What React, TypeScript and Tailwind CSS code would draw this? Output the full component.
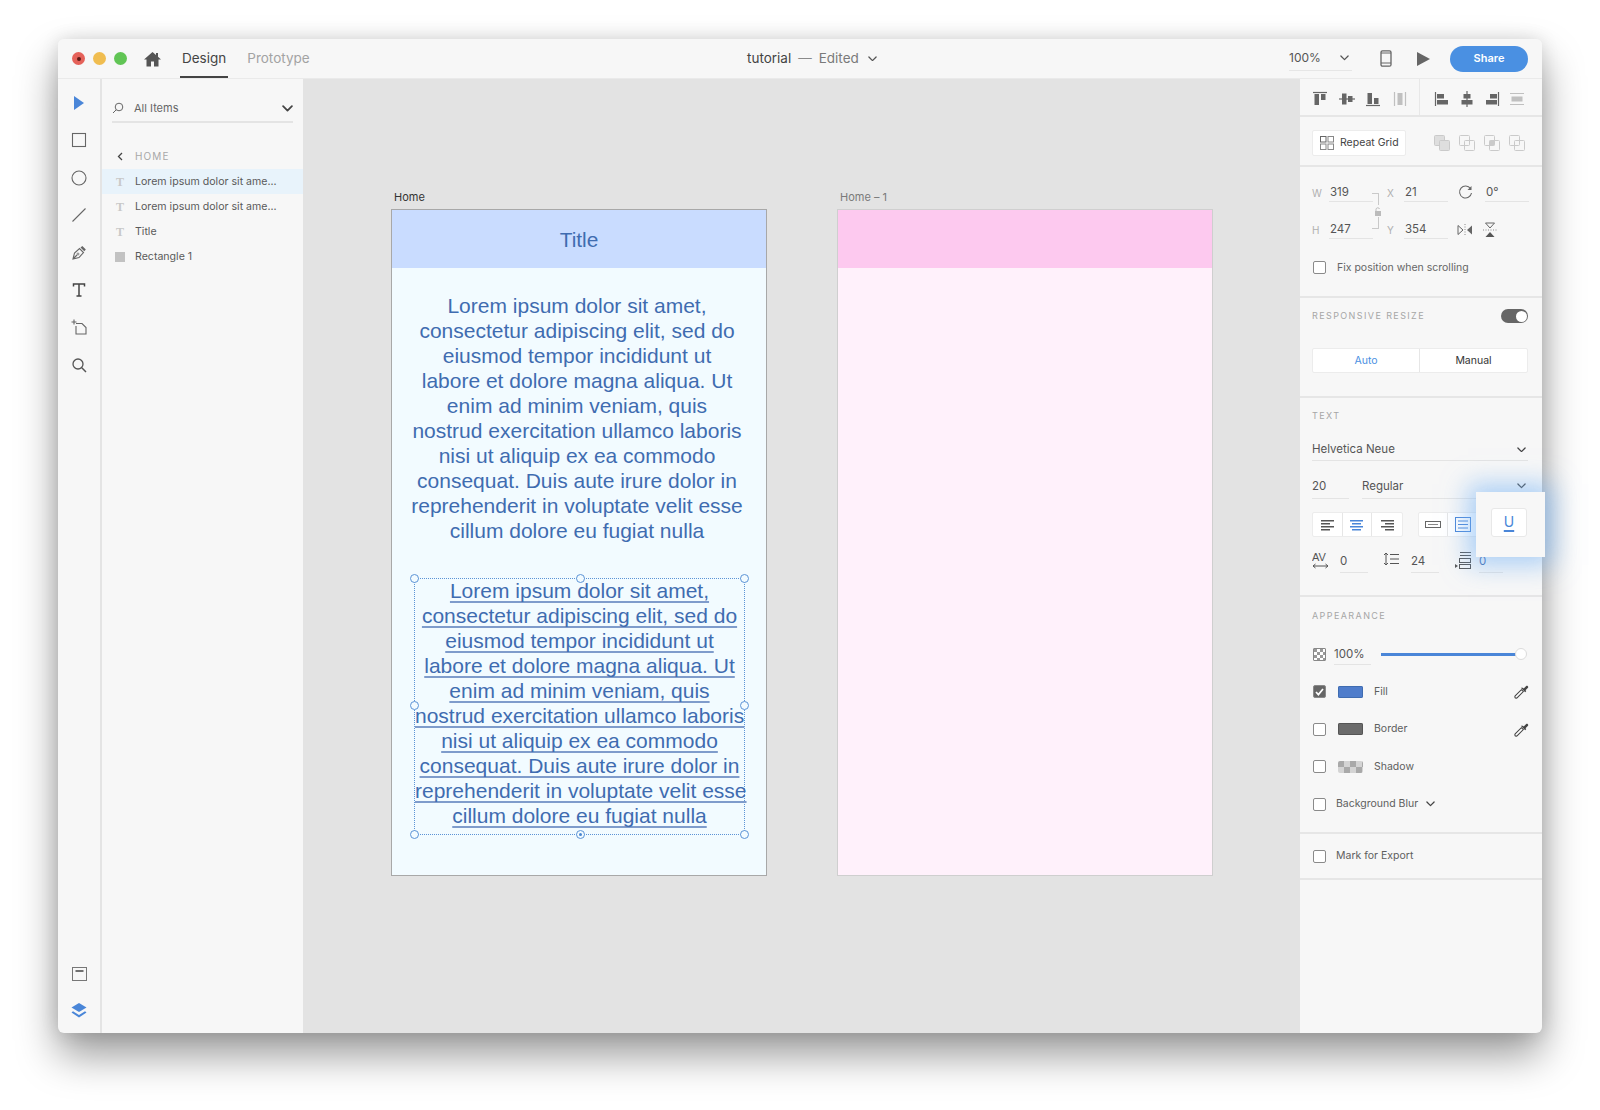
import React from "react";

const ui = "font-['Inter','Liberation_Sans',sans-serif]";
const doc = "font-['Liberation_Sans',Arial,sans-serif]";

function Ic({ w = 16, h = 16, children, className = "" }: { w?: number; h?: number; children: React.ReactNode; className?: string }) {
  return (
    <svg width={w} height={h} viewBox={`0 0 ${w} ${h}`} fill="none" className={"block shrink-0 " + className}>
      {children}
    </svg>
  );
}

const Chevron = ({ c = "#555", w = 9, sw = 1.4 }: { c?: string; w?: number; sw?: number }) => (
  <svg width={w} height={w * 0.62} viewBox="0 0 10 6" fill="none" className="block shrink-0">
    <path d="M1 1l4 4 4-4" stroke={c} strokeWidth={sw} strokeLinecap="round" strokeLinejoin="round" />
  </svg>
);

const Tee = () => (
  <span className="w-[10px] text-center font-['Liberation_Serif',serif] text-[12px] leading-none font-bold text-[#c8c8c8]">T</span>
);

const Box = ({ on = false }: { on?: boolean }) => (
  <div className={"ml-[1px] flex h-[13px] w-[13px] shrink-0 items-center justify-center rounded-[2px] border border-[#8a8a8a] " + (on ? "bg-[#666]" : "bg-white")}>
    {on && (
      <svg width="9" height="8" viewBox="0 0 9 8" fill="none">
        <path d="M1 4l2.400 2.600L8 1" stroke="#fff" strokeWidth="1.700" />
      </svg>
    )}
  </div>
);

const Dropper = () => (
  <Ic w={15} h={15}>
    <path d="M1.200 13.800c-.6-.6-.3-1.600.2-2.100L7.400 5.700l1.900 1.900-6 6c-.5.5-1.500.8-2.100.2z" stroke="#444" strokeWidth="1.100" fill="#fff" />
    <path d="M6.800 3.800l4.400 4.400 1.100-1.100-.8-.8 2.500-2.500c1-1-.8-2.800-1.800-1.800L9.700 4.500l-.8-.8z" fill="#444" />
  </Ic>
);

const Under = ({ className }: { className: string }) => <div className={"h-px bg-[#e4e4e4] " + className} />;

const lines = [
  "Lorem ipsum dolor sit amet,",
  "consectetur adipiscing elit, sed do",
  "eiusmod tempor incididunt ut",
  "labore et dolore magna aliqua. Ut",
  "enim ad minim veniam, quis",
  "nostrud exercitation ullamco laboris",
  "nisi ut aliquip ex ea commodo",
  "consequat. Duis aute irure dolor in",
  "reprehenderit in voluptate velit esse",
  "cillum dolore eu fugiat nulla",
];

const Para = ({ underline = false }: { underline?: boolean }) => (
  <div className={"whitespace-nowrap text-center text-[21px] leading-[25px] text-[#3f6cb0] " + doc + (underline ? " underline decoration-[#7f9ccb] decoration-[1.500px] underline-offset-[3px] [text-decoration-skip-ink:none]" : "")}>
    {lines.map((l) => (
      <div key={l}>{l}</div>
    ))}
  </div>
);

const Handle = ({ className, dot = false }: { className: string; dot?: boolean }) => (
  <div className={"absolute flex h-[9px] w-[9px] items-center justify-center rounded-full border border-[#5b93d6] bg-[#f2fbff] " + className}>
    {dot && <div className="h-[3px] w-[3px] rounded-full bg-[#4a86d0]" />}
  </div>
);

function Toolbar() {
  const s = "#666";
  return (
    <div className="flex w-[44px] shrink-0 flex-col items-center border-r-2 border-[#e4e4e4] pt-[16px]">
      <div className="flex flex-col items-center gap-[21.400px]">
        <Ic>
          <path d="M3 1l10 7-10 7z" fill="#4a86d8" />
        </Ic>
        <Ic>
          <rect x="1.500" y="1.500" width="13" height="13" stroke={s} strokeWidth="1.100" />
        </Ic>
        <Ic>
          <circle cx="8" cy="8" r="7" stroke={s} strokeWidth="1.100" />
        </Ic>
        <Ic>
          <path d="M1.500 14.500l13-13" stroke={s} strokeWidth="1.100" />
        </Ic>
        <Ic>
          <path d="M2 14l1.500-6 5-4.500 4 4-4.500 5zM2 14l4-4" stroke={s} strokeWidth="1.100" />
          <path d="M9.500 2.500l1.800-1.500 3.500 3.500-1.500 1.800z" fill={s} />
          <circle cx="7" cy="9" r="1" stroke={s} strokeWidth="0.800" />
        </Ic>
        <Ic>
          <path d="M2.500 4.500V2h11v2.500M8 2v12M5.500 14h5" stroke="#444" strokeWidth="1.500" />
        </Ic>
        <Ic>
          <path d="M5 4.500H11L15 8.500V15H5V7" stroke={s} strokeWidth="1.100" />
          <path d="M3 0.500v5M0.500 3h5" stroke={s} strokeWidth="1.100" />
        </Ic>
        <Ic>
          <circle cx="7" cy="7" r="5" stroke="#555" strokeWidth="1.300" />
          <path d="M10.800 10.800l4.200 4.200" stroke="#555" strokeWidth="1.500" />
        </Ic>
      </div>
      <div className="mt-auto mb-[15px] flex flex-col items-center gap-[22px]">
        <Ic w={15} h={14}>
          <rect x="0.500" y="0.500" width="14" height="13" stroke="#777" />
          <path d="M3.500 4h8" stroke="#444" strokeWidth="1.500" />
        </Ic>
        <Ic w={16} h={15}>
          <path d="M8 0l7.500 4.500L8 9 .5 4.500z" fill="#4a86d8" />
          <path d="M2 8.300L.5 9.500 8 14.500l7.500-5L14 8.300 8 12z" fill="#4a86d8" />
        </Ic>
      </div>
    </div>
  );
}

function Row({ children, label, sel = false }: { children: React.ReactNode; label: string; sel?: boolean }) {
  return (
    <div className={"flex h-[25px] items-center pl-[13px] text-[10.600px] text-[#5a5a5a] " + (sel ? "bg-[#e8f3fb]" : "")}>
      <div className="flex w-[20px] justify-start">{children}</div>
      <span>{label}</span>
    </div>
  );
}

function Layers() {
  return (
    <div className="w-[201px] shrink-0 pt-[20px]">
      <div className="mx-[10px] flex h-[24px] items-start border-b-2 border-[#e4e4e4] pt-[2px]">
        <Ic w={12} h={12} className="mt-[1px]">
          <circle cx="7" cy="5" r="3.800" stroke="#666" />
          <path d="M4.200 7.800L1 11" stroke="#666" />
        </Ic>
        <span className="ml-[10px] text-[11px] leading-[14px] text-[#666]">All Items</span>
        <div className="mt-[4px] ml-auto">
          <Chevron c="#444" w={11} sw={1.600} />
        </div>
      </div>
      <div className="mt-[17px] flex h-[22px] items-center pt-[11px] pl-[15px]">
        <svg width="6" height="9" viewBox="0 0 6 9" fill="none">
          <path d="M5 1L1.500 4.500 5 8" stroke="#444" strokeWidth="1.300" />
        </svg>
        <span className="ml-[12px] text-[10px] tracking-[1.100px] text-[#a8a8a8]">HOME</span>
      </div>
      <div className="mt-[7px]">
        <Row label="Lorem ipsum dolor sit ame..." sel>
          <Tee />
        </Row>
        <Row label="Lorem ipsum dolor sit ame...">
          <Tee />
        </Row>
        <Row label="Title">
          <Tee />
        </Row>
        <Row label="Rectangle 1">
          <div className="h-[10px] w-[10px] bg-[#c2c2c2]" />
        </Row>
      </div>
    </div>
  );
}

function Canvas() {
  return (
    <div className="flex flex-1 gap-[70px] bg-[#e3e3e3] pt-[106px] pl-[88px]">
      <div>
        <div className={"h-[24px] pt-[4px] pl-[3px] text-[11px] leading-[16px] text-[#333] " + ui}>Home</div>
        <div className="h-[667px] w-[376px] border border-[#a8a8a8] bg-[#f2fbff]">
          <div className={"flex h-[58px] items-center justify-center bg-[#c9dcff] pt-[2px] text-[20.900px] text-[#3f6cb0] " + doc}>Title</div>
          <div className="pt-[25px] pr-[4px]">
            <Para />
          </div>
          <div className="relative mt-[35px] mr-[21px] ml-[22px] h-[257px] border border-dotted border-[#5b93d6]">
            <div className="mt-[-1px]">
              <Para underline />
            </div>
            <Handle className="top-[-5px] left-[-5px]" />
            <Handle className="top-[-5px] left-[161px]" />
            <Handle className="top-[-5px] right-[-5px]" />
            <Handle className="top-[122px] left-[-5px]" />
            <Handle className="top-[122px] right-[-5px]" />
            <Handle className="bottom-[-5px] left-[-5px]" />
            <Handle className="bottom-[-5px] left-[161px]" dot />
            <Handle className="right-[-5px] bottom-[-5px]" />
          </div>
        </div>
      </div>
      <div>
        <div className={"h-[24px] pt-[4px] pl-[3px] text-[11px] leading-[16px] text-[#7a7a7a] " + ui}>Home – 1</div>
        <div className="h-[667px] w-[376px] border border-[#cfcfcf] bg-[#fff1fb]">
          <div className="h-[58px] bg-[#fdc9ef]" />
        </div>
      </div>
    </div>
  );
}

const AlignIcons = () => {
  const d = "#666";
  const g = "#c0c0c0";
  return (
    <div className="flex h-full items-stretch">
      <div className="flex w-[120px] items-center gap-[10.500px] border-r border-[#e8e8e8] pt-[3px] pl-[12px]">
        <Ic>
          <path d="M1 1.500h14" stroke={d} strokeWidth="1.200" />
          <rect x="2.500" y="3" width="4.500" height="11" fill={d} />
          <rect x="9" y="3" width="4.500" height="6" fill={d} />
        </Ic>
        <Ic>
          <path d="M0 8h16" stroke={d} strokeWidth="1.200" />
          <rect x="3" y="2.500" width="4.500" height="11" fill={d} />
          <rect x="9" y="5" width="4.500" height="6" fill={d} />
        </Ic>
        <Ic>
          <path d="M1 14.500h14" stroke={d} strokeWidth="1.200" />
          <rect x="2.500" y="2" width="4.500" height="11" fill={d} />
          <rect x="9" y="7" width="4.500" height="6" fill={d} />
        </Ic>
        <Ic>
          <path d="M2.500 1v14M13.500 1v14" stroke={g} strokeWidth="1.200" />
          <rect x="5.500" y="2" width="5" height="12" fill={g} />
        </Ic>
      </div>
      <div className="flex items-center gap-[9px] pt-[3px] pl-[14px]">
        <Ic>
          <path d="M1.500 1v14" stroke={d} strokeWidth="1.200" />
          <rect x="3" y="3" width="7" height="4.500" fill={d} />
          <rect x="3" y="9" width="11" height="4.500" fill={d} />
        </Ic>
        <Ic>
          <path d="M8 0v16" stroke={d} strokeWidth="1.200" />
          <rect x="4.500" y="3" width="7" height="4.500" fill={d} />
          <rect x="2.500" y="9" width="11" height="4.500" fill={d} />
        </Ic>
        <Ic>
          <path d="M14.500 1v14" stroke={d} strokeWidth="1.200" />
          <rect x="6" y="3" width="7" height="4.500" fill={d} />
          <rect x="2" y="9" width="11" height="4.500" fill={d} />
        </Ic>
        <Ic>
          <path d="M1 2.500h14M1 13.500h14" stroke={g} strokeWidth="1.200" />
          <rect x="2.500" y="5.500" width="11" height="5" fill={g} />
        </Ic>
      </div>
    </div>
  );
};

const Pf = ({ v }: { v: number }) => {
  const g = "#cacaca";
  return (
    <Ic>
      <rect x="0.500" y="0.500" width="10" height="10" rx="1" stroke={g} fill={v === 0 ? "#dedede" : "none"} />
      <rect x="5.500" y="5.500" width="10" height="10" rx="1" stroke={g} fill={v === 0 ? "#dedede" : "none"} />
      {v === 2 && <rect x="5.500" y="5.500" width="5" height="5" fill={g} />}
    </Ic>
  );
};

const Num = ({ k, v, u = "w-[44px]" }: { k: string; v: string; u?: string }) => (
  <div className="flex items-start">
    <span className="w-[17px] pt-[1px] text-[10px] leading-[16px] text-[#b0b0b0]">{k}</span>
    <div className={u}>
      <div className="h-[17px] pl-[1px] text-[11.500px] leading-[16px] text-[#555]">{v}</div>
      <Under className="" />
    </div>
  </div>
);

const Lbl = ({ children }: { children: React.ReactNode }) => (
  <div className="text-[9px] leading-[12px] tracking-[1.400px] text-[#a6a6a6]">{children}</div>
);

const Seg = ({ children, last = false }: { children: React.ReactNode; last?: boolean }) => (
  <div className={"flex h-full items-center justify-center " + (last ? "" : "border-r border-[#e6e6e6]")}>{children}</div>
);

const Bars = ({ c, kind }: { c: string; kind: "l" | "c" | "r" }) => {
  const a = kind === "l" ? [1, 1, 1, 1] : kind === "c" ? [1, 3, 1, 3] : [1, 5, 1, 5];
  const lens = [13, 9, 13, 9];
  return (
    <Ic w={15} h={12}>
      {lens.map((ln, i) => (
        <rect key={i} x={a[i]} y={1 + i * 3} width={ln} height="1.500" fill={c} />
      ))}
    </Ic>
  );
};

function ApRow({ swatch, label, on = false, drop = false }: { swatch: React.ReactNode; label: string; on?: boolean; drop?: boolean }) {
  return (
    <div className="flex h-[37.500px] items-center">
      <Box on={on} />
      <div className="ml-[12px] h-[12px] w-[25px] overflow-hidden rounded-[2px]">{swatch}</div>
      <span className="ml-[11px] text-[10.500px] text-[#5e5e5e]">{label}</span>
      {drop && (
        <div className="mr-[-1px] ml-auto">
          <Dropper />
        </div>
      )}
    </div>
  );
}

const Checks = ({ w, h, s, a, b }: { w: number; h: number; s: number; a: string; b: string }) => {
  const cells = [];
  for (let y = 0; y * s < h; y++) for (let x = 0; x * s < w; x++) cells.push(<rect key={x + "-" + y} x={x * s} y={y * s} width={s} height={s} fill={(x + y) % 2 ? a : b} />);
  return (
    <svg width={w} height={h} className="block">
      {cells}
    </svg>
  );
};

function Props() {
  const sec = "border-b-2 border-[#e6e6e6] pr-[14px] pl-[12px]";
  return (
    <div className="relative flex w-[242px] shrink-0 flex-col">
      <div className="h-[38px] border-b-2 border-[#e6e6e6]">
        <AlignIcons />
      </div>
      <div className={"flex h-[50px] items-center pt-[3px] " + sec}>
        <div className="flex h-[26px] w-[94px] items-center rounded-[2px] border border-[#ececec] bg-white pl-[7px]">
          <Ic w={14} h={14}>
            <rect x="0.500" y="0.500" width="5.500" height="5.500" stroke="#666" />
            <rect x="8" y="0.500" width="5.500" height="5.500" stroke="#888" />
            <rect x="0.500" y="8" width="5.500" height="5.500" stroke="#888" />
            <rect x="8" y="8" width="5.500" height="5.500" stroke="#888" />
          </Ic>
          <span className="ml-[6px] text-[10.500px] whitespace-nowrap text-[#444]">Repeat Grid</span>
        </div>
        <div className="ml-[28px] flex gap-[9px]">
          <Pf v={0} />
          <Pf v={1} />
          <Pf v={2} />
          <Pf v={3} />
        </div>
      </div>
      <div className={"relative h-[131px] pt-[17px] " + sec}>
        <div className="flex items-start">
          <Num k="W" v="319" />
          <div className="ml-[14px]">
            <Num k="X" v="21" />
          </div>
          <Ic w={15} h={15} className="mt-[1px] ml-[10px]">
            <path d="M12.500 3.500A6 6 0 1 0 13.500 8" stroke="#666" strokeWidth="1.100" />
            <path d="M13.500 1v4h-4z" fill="#666" />
          </Ic>
          <div className="ml-[12px]">
            <div className="w-[44px]">
              <div className="h-[17px] pl-[1px] text-[11.500px] leading-[16px] text-[#555]">0°</div>
              <Under className="" />
            </div>
          </div>
        </div>
        <div className="mt-[19px] flex items-start">
          <Num k="H" v="247" />
          <div className="ml-[14px]">
            <Num k="Y" v="354" />
          </div>
          <Ic w={16} h={14} className="mt-[2px] ml-[9px]">
            <path d="M1 2.500v9l5-4.500z" stroke="#666" />
            <path d="M15 2.500v9l-5-4.500z" fill="#666" />
            <path d="M8 1v12" stroke="#888" strokeDasharray="1 1.500" />
          </Ic>
          <Ic w={16} h={16} className="mt-[1px] ml-[9px]">
            <path d="M3.500 1h9L8 6z" stroke="#666" />
            <path d="M3.500 15h9L8 10z" fill="#555" />
            <path d="M1 8h14" stroke="#888" strokeDasharray="1 1.500" />
          </Ic>
        </div>
        <div className="absolute top-[26px] left-[72px] h-[12px] w-[7px] rounded-tr-[1px] border-t border-r border-[#c9c9c9]" />
        <div className="absolute top-[50px] left-[72px] h-[12px] w-[7px] rounded-br-[1px] border-r border-b border-[#c9c9c9]" />
        <Ic w={8} h={10} className="absolute top-[40px] left-[74px]">
          <path d="M2 4V2.500a1.800 1.800 0 0 1 3.500-.5" stroke="#bbb" />
          <rect x="1" y="4" width="6" height="5" fill="#bbb" />
        </Ic>
        <div className="mt-[21px] flex items-center">
          <Box />
          <span className="ml-[11px] text-[10.500px] text-[#666]">Fix position when scrolling</span>
        </div>
      </div>
      <div className={"h-[100px] pt-[11px] " + sec}>
        <div className="flex items-center justify-between">
          <Lbl>RESPONSIVE RESIZE</Lbl>
          <div className="flex h-[14px] w-[27px] items-center justify-end rounded-full bg-[#666] pr-[1px]">
            <div className="h-[11px] w-[11px] rounded-full bg-white" />
          </div>
        </div>
        <div className="mt-[25px] grid h-[25px] grid-cols-2 rounded-[2px] border border-[#ececec] bg-white text-[10.500px]">
          <Seg>
            <span className="text-[#4a90e2]">Auto</span>
          </Seg>
          <Seg last>
            <span className="text-[#333]">Manual</span>
          </Seg>
        </div>
      </div>
      <div className={"h-[199px] pt-[12px] " + sec}>
        <Lbl>TEXT</Lbl>
        <div className="mt-[19px] flex h-[20px] items-center justify-between border-b border-[#e4e4e4] pb-[2px] text-[11.500px] text-[#555]">
          <span>Helvetica Neue</span>
          <div className="mr-[2px]">
            <Chevron c="#444" />
          </div>
        </div>
        <div className="mt-[17px] flex gap-[13px] text-[11.500px] text-[#555]">
          <div className="h-[21px] w-[37px] border-b border-[#e4e4e4]">20</div>
          <div className="flex h-[21px] flex-1 items-start justify-between border-b border-[#e4e4e4]">
            <span>Regular</span>
            <div className="mt-[5px] mr-[2px]">
              <Chevron c="#444" />
            </div>
          </div>
        </div>
        <div className="mt-[13px] flex">
          <div className="grid h-[25px] w-[91px] grid-cols-3 rounded-[2px] border border-[#ececec] bg-white">
            <Seg>
              <Bars c="#555" kind="l" />
            </Seg>
            <Seg>
              <Bars c="#4a86d8" kind="c" />
            </Seg>
            <Seg last>
              <Bars c="#555" kind="r" />
            </Seg>
          </div>
          <div className="ml-[15px] grid h-[25px] w-[60px] grid-cols-2 rounded-[2px] border border-[#ececec] bg-white">
            <Seg>
              <Ic w={16} h={9}>
                <rect x="0.500" y="1.500" width="15" height="6" stroke="#666" />
                <path d="M3 4.500h10" stroke="#888" />
              </Ic>
            </Seg>
            <Seg last>
              <Ic w={16} h={15}>
                <rect x="0.500" y="0.500" width="15" height="14" stroke="#4a86d8" />
                <path d="M3 4h10M3 7.500h10M3 11h10" stroke="#4a86d8" />
              </Ic>
            </Seg>
          </div>
        </div>
        <div className="mt-[17px] flex items-start text-[11.500px] leading-[14px] text-[#555]">
          <Ic w={17} h={18} className="mt-[-2px]">
            <text x="0" y="9" fontSize="11" fontFamily="Liberation Sans" fill="#555">
              AV
            </text>
            <path d="M1 14h15M1 14l2.500-2M1 14l2.500 2M16 14l-2.500-2M16 14l-2.500 2" stroke="#555" />
          </Ic>
          <div className="ml-[11px] w-[28px]">
            <div className="h-[18px]">0</div>
            <Under className="" />
          </div>
          <Ic w={16} h={14} className="mt-[-2px] ml-[15px]">
            <path d="M3 1v12M1 3l2-2 2 2M1 11l2 2 2-2" stroke="#555" />
            <path d="M7 2.500h9M7 7h9M7 11.500h9" stroke="#555" />
          </Ic>
          <div className="ml-[12px] w-[28px]">
            <div className="h-[18px]">24</div>
            <Under className="" />
          </div>
          <Ic w={16} h={18} className="mt-[-3px] ml-[16px]">
            <path d="M5 1.500h11M5 4.500h11" stroke="#555" />
            <rect x="4.500" y="7.500" width="11" height="4" stroke="#555" />
            <rect x="4.500" y="13.500" width="11" height="4" stroke="#555" />
            <path d="M0 13l3 2-3 2z" fill="#555" />
          </Ic>
          <div className="ml-[8px] w-[24px]">
            <div className="h-[18px] text-[#3f6cb0]">0</div>
            <Under className="" />
          </div>
        </div>
      </div>
      <div className={"h-[237px] pt-[13px] " + sec}>
        <Lbl>APPEARANCE</Lbl>
        <div className="mt-[25px] flex items-center">
          <div className="ml-[1px] h-[13px] w-[13px] overflow-hidden rounded-[1px] border border-[#888]">
            <Checks w={13} h={13} s={3} a="#fff" b="#999" />
          </div>
          <div className="ml-[8px] w-[37px]">
            <div className="h-[14px] text-[11.500px] leading-[14px] text-[#555]">100%</div>
          </div>
          <div className="relative ml-[10px] h-[3px] w-[139px] bg-[#4a86d8]">
            <div className="absolute top-[-5px] right-[-7px] h-[12px] w-[12px] rounded-full border border-[#dcdcdc] bg-white" />
          </div>
        </div>
        <Under className="mt-[3px] ml-[22px] w-[37px]" />
        <div className="mt-[8px]">
          <ApRow on drop label="Fill" swatch={<div className="h-full w-full border border-[#3f6cb0] bg-[#4f7dcb]" />} />
          <ApRow drop label="Border" swatch={<div className="h-full w-full border border-[#555] bg-[#6b6b6b]" />} />
          <ApRow label="Shadow" swatch={<Checks w={25} h={12} s={6} a="#d4d4d4" b="#a9a9a9" />} />
          <div className="flex h-[37.500px] items-center">
            <Box />
            <span className="ml-[10px] text-[10.500px] text-[#5e5e5e]">Background Blur</span>
            <div className="ml-[8px]">
              <Chevron c="#444" />
            </div>
          </div>
        </div>
      </div>
      <div className={"flex h-[46px] items-center " + sec}>
        <Box />
        <span className="ml-[10px] text-[10.500px] text-[#5e5e5e]">Mark for Export</span>
      </div>
      <div className="absolute top-[413px] left-[176px] flex h-[65px] w-[69px] items-center justify-center bg-[#f7f7f7] pr-[3px] pb-[4px] shadow-[0_0_24px_8px_rgba(120,180,245,0.6)]">
        <div className="flex h-[29px] w-[36px] items-center justify-center rounded-[3px] border border-[#e8e8e8] bg-white pb-[2px]">
          <span className="text-[14px] leading-[15px] text-[#4a86d8] underline decoration-[1.500px] underline-offset-[3px]">U</span>
        </div>
      </div>
    </div>
  );
}

function TopBar() {
  return (
    <div className="flex h-[40px] shrink-0 items-center rounded-t-[6px] border-b border-[#eaeaea] bg-[#f7f7f7]">
      <div className="flex h-full w-[689px] shrink-0 items-center pl-[14px]">
        <div className="flex gap-[8px]">
          <div className="flex h-[13px] w-[13px] items-center justify-center rounded-full bg-[#e5625a]">
            <div className="h-[4px] w-[4px] rounded-full bg-[#5e1a16]" />
          </div>
          <div className="h-[13px] w-[13px] rounded-full bg-[#f0bd50]" />
          <div className="h-[13px] w-[13px] rounded-full bg-[#61c555]" />
        </div>
        <Ic w={17} h={16} className="ml-[17px]">
          <path d="M8.500 1L0 8.500h2.500V15.500H7v-5h3v5h4.500V8.500H17l-3-2.700V2h-2v2z" fill="#555" />
        </Ic>
        <div className="relative ml-[19px] flex h-full items-center px-[2px] text-[13.500px] text-[#444]">
          Design
          <div className="absolute right-0 bottom-0 left-0 h-[2px] bg-[#444]" />
        </div>
        <div className="ml-[19px] text-[13.500px] text-[#a3a3a3]">Prototype</div>
      </div>
      <div className="flex items-center text-[13.500px] text-[#444]">
        <span>tutorial</span>
        <span className="ml-[7px] text-[#8a8a8a]">—</span>
        <span className="ml-[7px] text-[#7a7a7a]">Edited</span>
        <div className="ml-[9px]">
          <Chevron c="#555" />
        </div>
      </div>
      <div className="ml-auto flex h-full items-center pr-[14px]">
        <div className="relative flex h-[24px] w-[63px] items-center justify-between border-b border-[#e6e6e6] pr-[3px] text-[12px] text-[#555]">
          <span>100%</span>
          <Chevron c="#555" />
        </div>
        <Ic w={12} h={17} className="ml-[28px]">
          <rect x="1" y="0.800" width="10" height="15.400" rx="1.500" stroke="#666" strokeWidth="1.300" />
          <path d="M1 13h10M1 3h10" stroke="#666" />
        </Ic>
        <Ic w={14} h={14} className="ml-[24px]">
          <path d="M1 0l13 7-13 7z" fill="#666" />
        </Ic>
        <div className="ml-[20px] flex h-[26px] w-[78px] items-center justify-center rounded-full bg-[#4a90e2] text-[11px] font-semibold text-white">Share</div>
      </div>
    </div>
  );
}

export default function App() {
  return (
    <div className={"h-[1110px] w-[1600px] overflow-hidden bg-white pt-[39px] pl-[58px] " + ui}>
      <div className="flex h-[994px] w-[1484px] flex-col rounded-[6px] bg-[#f7f7f7] shadow-[0_22px_42px_rgba(0,0,0,0.4),0_0_18px_rgba(0,0,0,0.12)]">
        <TopBar />
        <div className="flex min-h-0 flex-1">
          <Toolbar />
          <Layers />
          <Canvas />
          <Props />
        </div>
      </div>
    </div>
  );
}
